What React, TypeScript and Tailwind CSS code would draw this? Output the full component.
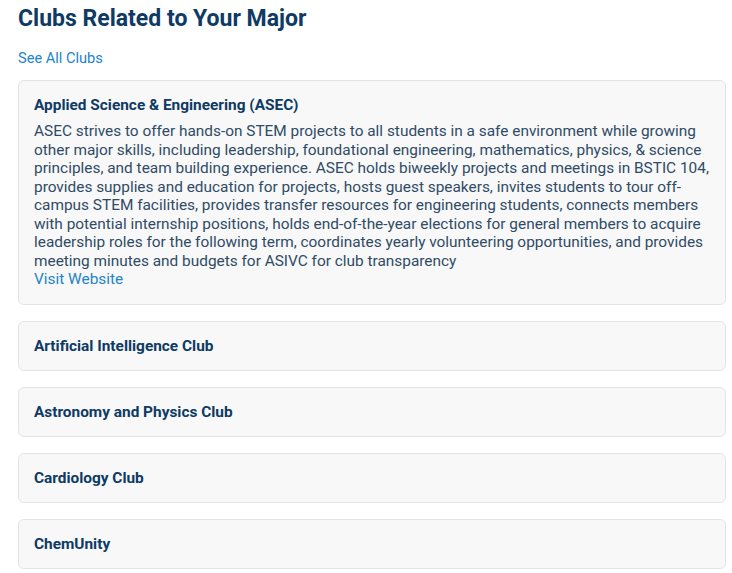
const clubs = [
  {
    name: 'Applied Science & Engineering (ASEC)',
    description:
      'ASEC strives to offer hands-on STEM projects to all students in a safe environment while growing other major skills, including leadership, foundational engineering, mathematics, physics, & science principles, and team building experience. ASEC holds biweekly projects and meetings in BSTIC 104, provides supplies and education for projects, hosts guest speakers, invites students to tour off-campus STEM facilities, provides transfer resources for engineering students, connects members with potential internship positions, holds end-of-the-year elections for general members to acquire leadership roles for the following term, coordinates yearly volunteering opportunities, and provides meeting minutes and budgets for ASIVC for club transparency',
    open: true,
  },
  { name: 'Artificial Intelligence Club' },
  { name: 'Astronomy and Physics Club' },
  { name: 'Cardiology Club' },
  { name: 'ChemUnity' },
]

export default function App() {
  return (
    <div className="h-[573px] overflow-hidden bg-white pl-[18px] pr-[6px] pt-[5px] font-['Roboto',sans-serif] text-[#0e3a64]">
      <h1 className="text-[23px] font-bold leading-[28px]">Clubs Related to Your Major</h1>

      <a href="#" className="mt-[16px] block text-[14.6px] leading-[18px] text-[#2384c9]">
        See All Clubs
      </a>

      <div className="mt-[13px] flex flex-col gap-4">
        {clubs.map((club) => (
          <div
            key={club.name}
            className="rounded-md border border-[#e4e4e4] bg-[#f8f8f8] px-[15px] py-[15px]"
          >
            <h2 className="text-[15.4px] font-bold leading-[18px]">{club.name}</h2>
            {club.open && (
              <>
                <p className="mt-[8px] text-[15.4px] leading-[18.5px] text-[#2f4b66]">
                  {club.description}
                </p>
                <a href="#" className="block text-[15.4px] leading-[18.5px] text-[#2384c9]">
                  Visit Website
                </a>
              </>
            )}
          </div>
        ))}
      </div>
    </div>
  )
}
